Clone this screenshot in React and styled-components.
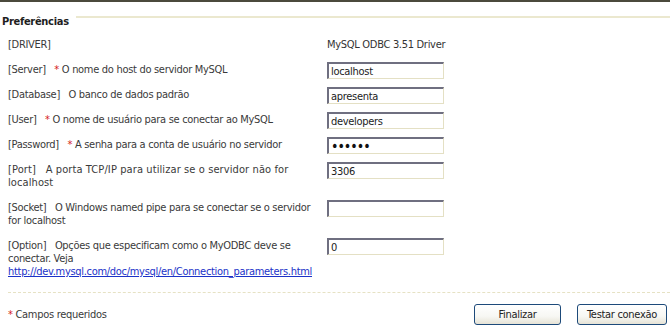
import styled, { createGlobalStyle } from 'styled-components'

const GlobalStyle = createGlobalStyle`
  html, body {
    margin: 0;
    padding: 0;
    background: #fff;
  }
  body {
    font-family: "DejaVu Sans Condensed", "DejaVu Sans", sans-serif;
    font-size: 11px;
    letter-spacing: -0.3px;
    color: #3a3a3a;
  }
`

//////////
// Page
const Page = styled.div`
  width: 670px;
  height: 329px;
  border-top: 2px solid #4b4a3c;
  box-sizing: border-box;
  overflow: hidden;
`

const Legend = styled.div`
  display: flex;
  align-items: flex-start;
  padding: 13px 0 0 2px;
`
const LegendTitle = styled.div`
  font-weight: bold;
  color: #1e1e1e;
  font-size: 11px;
  line-height: 14px;
`
const LegendLine = styled.div`
  flex: 1;
  margin: 1px 0 0 7px;
  border-top: 2px solid #ebe8cf;
`

// Form rows
const Form = styled.div`
  padding: 4px 0 7px 8px;
`
const Row = styled.div`
  display: grid;
  grid-template-columns: 310px 1fr;
  column-gap: 9px;
  align-items: start;
  padding: 4px 0;
`
const Label = styled.div`
  line-height: 13px;
  padding: 1px 0 3px 0;
  letter-spacing: ${props => props.spacing ?? -0.3}px;
`
const Req = styled.span`
  color: #d42020;
`
const Value = styled.div`
  line-height: 13px;
  padding: 1px 0 3px 0;
  color: #333;
`
const Field = styled.input`
  width: 117px;
  height: 17px;
  box-sizing: border-box;
  margin: 0;
  padding: 0 0 0 2px;
  border-top: 2px solid #6f6f80;
  border-left: 2px solid #6f6f80;
  border-right: 1px solid #e4e0c4;
  border-bottom: 1px solid #e4e0c4;
  font-family: "DejaVu Sans Condensed", "DejaVu Sans", sans-serif;
  font-size: 11px;
  letter-spacing: -0.3px;
  color: #222;
  outline: none;
  ${props => props.type === 'password' && `
    font-size: 14px;
    letter-spacing: -1px;
    color: #111;
  `}
`
const Link = styled.a`
  color: #1b32c8;
  text-decoration: underline;
`

// Footer
const Separator = styled.div`
  margin-left: 8px;
  border-top: 1px dashed #e6e2c4;
`
const Footer = styled.div`
  display: flex;
  align-items: center;
  justify-content: space-between;
  padding: 11px 3px 0 8px;
`
const Buttons = styled.div`
  display: flex;
  gap: 16px;
`
const Button = styled.button`
  width: ${props => props.w}px;
  height: 21px;
  margin: 0;
  padding: 0;
  border: 1px solid #1d4a7a;
  border-radius: 3px;
  background: linear-gradient(#ffffff 0%, #f7f7f3 60%, #e6e3d6 100%);
  font-family: "DejaVu Sans Condensed", "DejaVu Sans", sans-serif;
  font-size: 11px;
  letter-spacing: -0.3px;
  color: #222;
`

const rows = [
  { key: 'Server', req: true, text: 'O nome do host do servidor MySQL', value: 'localhost' },
  { key: 'Database', text: 'O banco de dados padrão', value: 'apresenta' },
  { key: 'User', req: true, text: 'O nome de usuário para se conectar ao MySQL', value: 'developers' },
  { key: 'Password', req: true, text: 'A senha para a conta de usuário no servidor', value: 'secret', type: 'password' },
  { key: 'Port', text: 'A porta TCP/IP para utilizar se o servidor não for localhost', value: '3306', spacing: 0.1 },
  { key: 'Socket', text: 'O Windows named pipe para se conectar se o servidor for localhost', value: '' },
]

function App() {
  return (
    <Page>
      <GlobalStyle />
      <Legend>
        <LegendTitle>Preferências</LegendTitle>
        <LegendLine />
      </Legend>

      <Form>
        <Row>
          <Label>[DRIVER]</Label>
          <Value>MySQL ODBC 3.51 Driver</Value>
        </Row>
        {rows.map(({ key, req, text, value, type, spacing }) => (
          <Row key={key}>
            <Label spacing={spacing}>
              [{key}]&nbsp;&nbsp; {req ? <Req>* </Req> : ' '}{text}
            </Label>
            <div>
              <Field type={type || 'text'} defaultValue={value} readOnly />
            </div>
          </Row>
        ))}
        <Row>
          <Label>
            [Option]&nbsp;&nbsp; Opções que especificam como o MyODBC deve se conectar. Veja{' '}
            <Link href="#">http://dev.mysql.com/doc/mysql/en/Connection_parameters.html</Link>
          </Label>
          <div>
            <Field type="text" defaultValue="0" readOnly />
          </div>
        </Row>
      </Form>

      <Separator />
      <Footer>
        <div><Req>*</Req> Campos requeridos</div>
        <Buttons>
          <Button w={87}>Finalizar</Button>
          <Button w={90}>Testar conexão</Button>
        </Buttons>
      </Footer>
    </Page>
  )
}

export default App
